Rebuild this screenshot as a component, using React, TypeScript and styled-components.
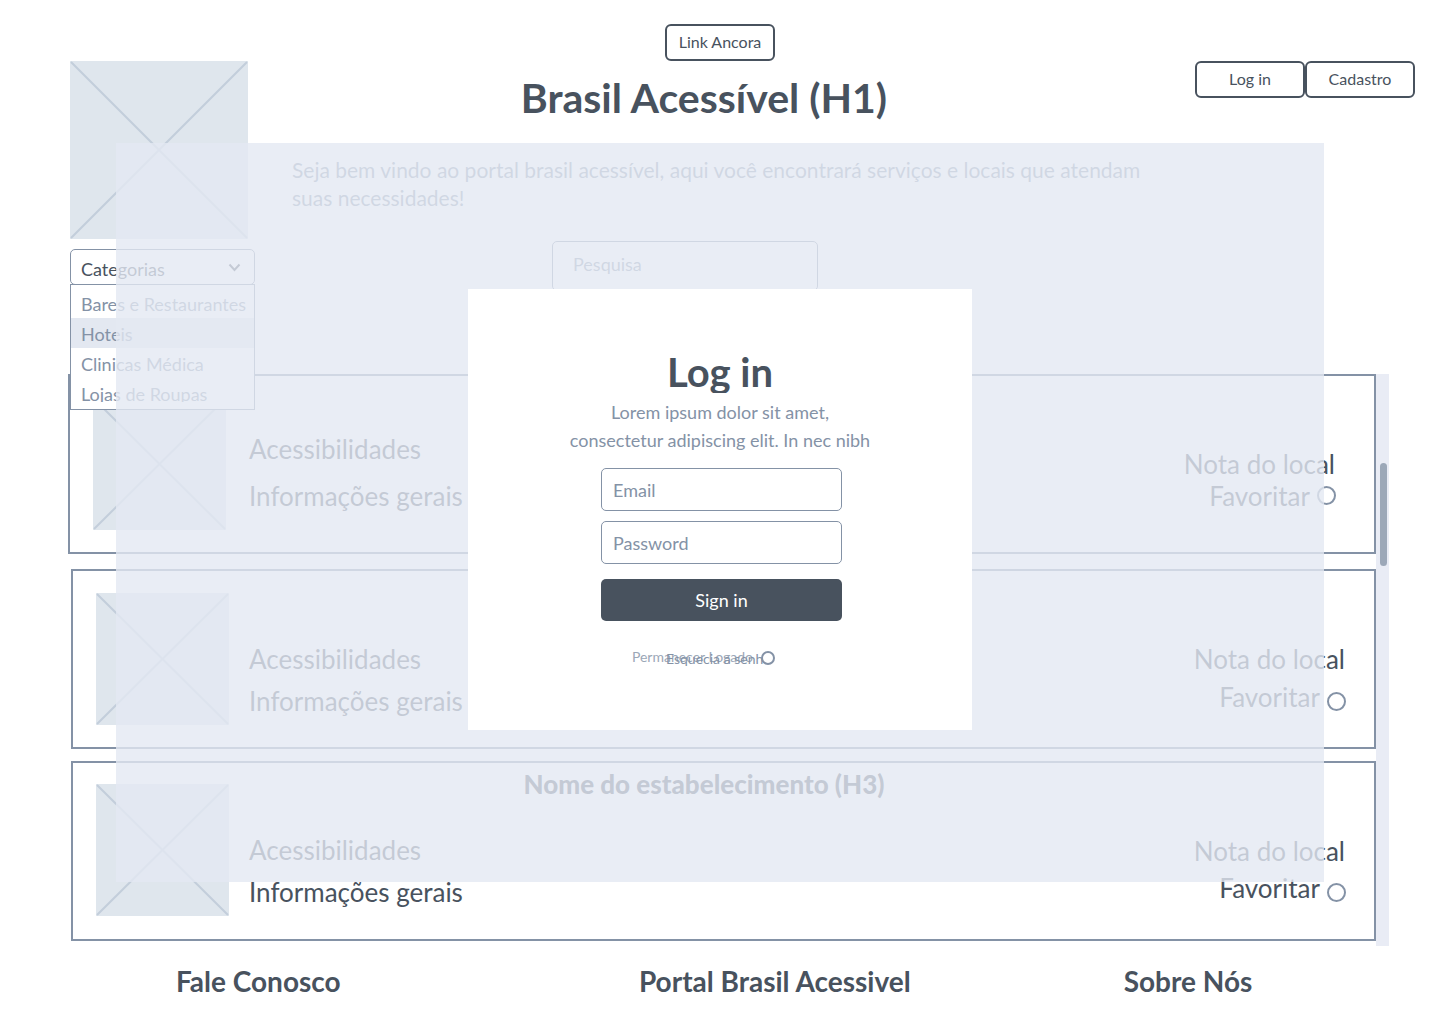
import React from "react";
import styled, { createGlobalStyle, css } from "styled-components";

const ink = "#48525e";
const slate = "#8492a6";
const mist = "#e9ecf5";

const GlobalStyle = createGlobalStyle`
  *, *::before, *::after { box-sizing: border-box; }
  body {
    margin: 0;
    background: #fff;
    color: ${ink};
    font-family: Lato, "Liberation Sans", sans-serif;
  }
  h1, h2, h3, p, ul { margin: 0; padding: 0; }
  button, input, select { font-family: inherit; margin: 0; }
`;

const Page = styled.div`
  position: relative;
  min-height: 100vh;
`;

const Header = styled.header`
  display: grid;
  grid-template-columns: minmax(0, 1fr) minmax(0, 856px) minmax(0, 1fr);
  min-height: 374px;
`;

const Side = styled.div`
  padding: 61px 0 0 70px;
`;

const Intro = styled.div`
  display: flex;
  flex-direction: column;
  align-items: center;
  padding-top: 24px;
`;

const Account = styled.nav`
  display: flex;
  justify-content: flex-end;
  align-items: flex-start;
  padding: 61px 25px 0 0;
`;

const outline = css`
  display: flex;
  align-items: center;
  justify-content: center;
  width: 110px;
  height: 37px;
  padding: 0 0 2px;
  border: 2px solid ${ink};
  border-radius: 6px;
  background: #fff;
  color: ${ink};
  font-size: 16px;
  line-height: 20px;
`;

const OutlineButton = styled.button`
  ${outline}
`;

const AnchorLink = styled.a`
  ${outline}
  text-decoration: none;
`;

const PageTitle = styled.h1`
  align-self: stretch;
  margin-top: 13px;
  padding-right: 32px;
  text-align: center;
  font-size: 41px;
  line-height: 48px;
  font-weight: 700;
`;

const Welcome = styled.p`
  align-self: stretch;
  margin-top: 34px;
  color: ${slate};
  font-size: 21px;
  line-height: 28px;
`;

const SearchForm = styled.form`
  display: flex;
  justify-content: center;
  align-self: stretch;
  margin-top: 29px;
  padding-right: 70px;
`;

const field = css`
  border: 1px solid ${slate};
  border-radius: 5px;
  background: #fff;
  color: ${ink};
  font-size: 18px;
  outline: none;
  &::placeholder { color: ${slate}; opacity: 1; }
`;

const SearchInput = styled.input`
  ${field}
  width: 266px;
  height: 50px;
  padding: 0 20px 4px;
`;

const Picture = styled.svg<{ $width: number; $height: number }>`
  display: block;
  flex: none;
  width: ${(p) => p.$width}px;
  height: ${(p) => p.$height}px;
  background: #dfe6ed;
`;

const Categories = styled.div`
  position: relative;
  width: 185px;
  margin-top: 10px;
`;

const CategorySelect = styled.select`
  ${field}
  display: block;
  appearance: none;
  width: 100%;
  height: 36px;
  padding: 4px 10px 0;
`;

const Chevron = styled.svg`
  position: absolute;
  top: 14px;
  right: 14px;
  width: 13px;
  height: 9px;
  pointer-events: none;
`;

const Menu = styled.ul`
  position: absolute;
  z-index: 1;
  top: 35px;
  left: 0;
  width: 100%;
  height: 126px;
  padding-top: 3px;
  border: 1px solid ${slate};
  background: #fff;
  list-style: none;
`;

const MenuItem = styled.li<{ $active?: boolean }>`
  height: 30px;
  background: ${(p) => (p.$active ? "#e3e8f1" : "transparent")};
  &:last-child {
    height: 24px;
    overflow: hidden;
  }
`;

const MenuButton = styled.button`
  display: block;
  width: 100%;
  padding: 0 0 0 10px;
  border: 0;
  background: none;
  color: ${slate};
  text-align: left;
  white-space: nowrap;
  font-size: 18px;
  line-height: 32px;
`;

const Results = styled.main`
  display: flex;
  margin: 0 51px 0 68px;
`;

const Cards = styled.div`
  flex: 1;
  min-width: 0;
  padding-bottom: 5px;
`;

const Card = styled.article<{ $lead?: boolean; $gap: number }>`
  display: flex;
  min-height: 180px;
  margin: ${(p) => p.$gap}px 0 0 ${(p) => (p.$lead ? 0 : 3)}px;
  padding: 0 ${(p) => (p.$lead ? 39 : 29)}px 0 23px;
  border: 2px solid ${slate};
`;

const CardPicture = styled.div<{ $titled: boolean }>`
  padding-top: ${(p) => (p.$titled ? 21 : 22)}px;
`;

const Info = styled.div<{ $lead?: boolean; $titled: boolean }>`
  display: flex;
  flex: 1;
  flex-direction: column;
  gap: ${(p) => (p.$lead ? 15 : 10)}px;
  min-width: 0;
  padding: ${(p) => (p.$titled ? 5 : p.$lead ? 57 : 72)}px 0 0 ${(p) => (p.$lead ? 23 : 20)}px;
  font-size: 26px;
  line-height: 32px;
`;

const CardTitle = styled.h3`
  margin-bottom: 24px;
  text-align: center;
  font-size: 26px;
  line-height: 32px;
  font-weight: 900;
`;

const Rating = styled.div<{ $lead?: boolean; $titled: boolean }>`
  display: flex;
  flex-direction: column;
  align-items: flex-end;
  gap: ${(p) => (p.$lead ? 0 : p.$titled ? 5 : 6)}px;
  width: 186px;
  padding-top: 72px;
  font-size: 26px;
  line-height: 32px;
  white-space: nowrap;
`;

const Favorite = styled.label<{ $lead?: boolean }>`
  display: flex;
  align-items: ${(p) => (p.$lead ? "center" : "flex-end")};
  gap: 7px;
  margin-right: -1px;
`;

const Radio = styled.input<{ $size: number }>`
  appearance: none;
  flex: none;
  width: ${(p) => p.$size}px;
  height: ${(p) => p.$size}px;
  margin: 0 0 2px;
  border: 2px solid ${slate};
  border-radius: 50%;
  background: #fff;
`;

const Track = styled.div`
  width: 13px;
  padding: 89px 2px 0 4px;
  background: ${mist};
`;

const Thumb = styled.div`
  height: 103px;
  border-radius: 4px;
  background: #9ca8b8;
`;

const Footer = styled.footer`
  display: grid;
  grid-template-columns: 5fr 5fr 3fr;
  padding: 17px 97px 0 0;
`;

const FooterTitle = styled.h2`
  text-align: center;
  font-size: 28px;
  line-height: 36px;
  font-weight: 700;
`;

const Backdrop = styled.div`
  position: absolute;
  z-index: 2;
  inset: 143px 116px 142px;
  display: flex;
  justify-content: center;
  align-items: flex-start;
  padding-top: 146px;
  background: rgba(228, 232, 242, 0.8);
`;

const Dialog = styled.section`
  width: 504px;
  padding: 59px 0 63px;
  background: #fff;
`;

const DialogTitle = styled.h2`
  height: 45px;
  overflow: hidden;
  text-align: center;
  font-size: 40px;
  line-height: 48px;
  font-weight: 700;
`;

const DialogText = styled.p`
  margin-top: 5px;
  padding: 0 100px;
  color: ${slate};
  text-align: center;
  font-size: 18px;
  line-height: 28px;
`;

const LoginForm = styled.form`
  display: flex;
  flex-direction: column;
  gap: 10px;
  padding: 14px 130px 0 133px;
`;

const LoginInput = styled.input`
  ${field}
  width: 100%;
  height: 43px;
  padding: 0 11px;
`;

const SubmitButton = styled.button`
  height: 42px;
  margin-top: 5px;
  border: 0;
  border-radius: 5px;
  background: ${ink};
  color: #fff;
  font-size: 18px;
`;

const LoginOptions = styled.div`
  position: relative;
  display: flex;
  justify-content: center;
  margin-top: 16px;
  padding-right: 36px;
  font-size: 14px;
  line-height: 20px;
`;

const StayLogged = styled.label`
  display: flex;
  align-items: flex-end;
  gap: 8px;
  color: #9ba7b7;
  white-space: nowrap;
`;

const ForgotLink = styled.a`
  position: absolute;
  top: 2px;
  left: 65px;
  color: ${slate};
  text-decoration: none;
  white-space: nowrap;
`;

function Placeholder({ width, height }: { width: number; height: number }) {
  return (
    <Picture $width={width} $height={height} viewBox={`0 0 ${width} ${height}`} aria-hidden="true">
      <path
        d={`M1 1L${width - 1} ${height - 1}M${width - 1} 1L1 ${height - 1}`}
        stroke="#c3cedb"
        strokeWidth="2"
      />
    </Picture>
  );
}

const categories = ["Bares e Restaurantes", "Hoteis", "Clinicas Médica", "Lojas de Roupas"];

const places = [
  { id: "p1", lead: true, gap: 0, title: "" },
  { id: "p2", lead: false, gap: 15, title: "" },
  { id: "p3", lead: false, gap: 12, title: "Nome do estabelecimento (H3)" },
];

export default function App() {
  return (
    <Page>
      <GlobalStyle />
      <Header>
        <Side>
          <Placeholder width={178} height={178} />
          <Categories>
            <CategorySelect aria-label="Categorias">
              <option>Categorias</option>
            </CategorySelect>
            <Chevron viewBox="0 0 13 9" aria-hidden="true">
              <path d="M1.5 1.5L6.5 7L11.5 1.5" fill="none" stroke={ink} strokeWidth="2" />
            </Chevron>
            <Menu>
              {categories.map((name) => (
                <MenuItem key={name} $active={name === "Hoteis"}>
                  <MenuButton type="button">{name}</MenuButton>
                </MenuItem>
              ))}
            </Menu>
          </Categories>
        </Side>
        <Intro>
          <AnchorLink href="#resultados">Link Ancora</AnchorLink>
          <PageTitle>Brasil Acessível (H1)</PageTitle>
          <Welcome>
            Seja bem vindo ao portal brasil acessível, aqui você encontrará serviços e locais que atendam suas
            necessidades!
          </Welcome>
          <SearchForm>
            <SearchInput type="search" placeholder="Pesquisa" aria-label="Pesquisa" />
          </SearchForm>
        </Intro>
        <Account>
          <OutlineButton type="button">Log in</OutlineButton>
          <OutlineButton type="button">Cadastro</OutlineButton>
        </Account>
      </Header>

      <Results id="resultados">
        <Cards>
          {places.map((place) => {
            const titled = place.title !== "";
            return (
              <Card key={place.id} $lead={place.lead} $gap={place.gap}>
                <CardPicture $titled={titled}>
                  <Placeholder width={133} height={132} />
                </CardPicture>
                <Info $lead={place.lead} $titled={titled}>
                  {titled && <CardTitle>{place.title}</CardTitle>}
                  <p>Acessibilidades</p>
                  <p>Informações gerais</p>
                </Info>
                <Rating $lead={place.lead} $titled={titled}>
                  <p>Nota do local</p>
                  <Favorite $lead={place.lead}>
                    Favoritar
                    <Radio type="radio" name={place.id} $size={19} />
                  </Favorite>
                </Rating>
              </Card>
            );
          })}
        </Cards>
        <Track>
          <Thumb />
        </Track>
      </Results>

      <Footer>
        <FooterTitle>Fale Conosco</FooterTitle>
        <FooterTitle>Portal Brasil Acessivel</FooterTitle>
        <FooterTitle>Sobre Nós</FooterTitle>
      </Footer>

      <Backdrop>
        <Dialog role="dialog" aria-labelledby="login-title">
          <DialogTitle id="login-title">Log in</DialogTitle>
          <DialogText>Lorem ipsum dolor sit amet, consectetur adipiscing elit. In nec nibh</DialogText>
          <LoginForm>
            <LoginInput type="email" placeholder="Email" aria-label="Email" />
            <LoginInput type="password" placeholder="Password" aria-label="Password" />
            <SubmitButton type="button">Sign in</SubmitButton>
            <LoginOptions>
              <StayLogged>
                Permanecer Logado
                <Radio type="radio" name="stay" $size={14} />
              </StayLogged>
              <ForgotLink href="#senha">Esquecia a senh</ForgotLink>
            </LoginOptions>
          </LoginForm>
        </Dialog>
      </Backdrop>
    </Page>
  );
}
